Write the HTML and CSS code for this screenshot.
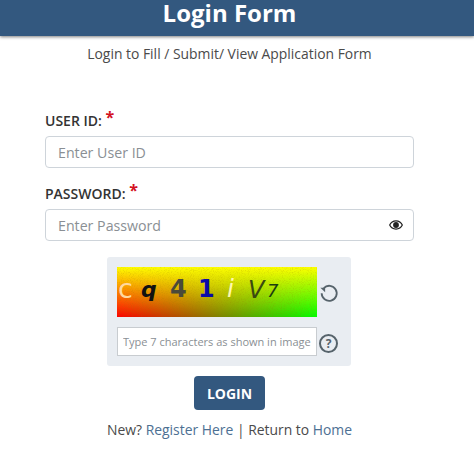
FILE: index.html
```html
<!DOCTYPE html>
<html lang="en">
<head>
    <meta charset="UTF-8">
    <meta name="viewport" content="width=device-width, initial-scale=1.0">
    <title>Login Form</title>
    <link rel="stylesheet" href="styles.css">
</head>
<body>
    <header class="banner">
        <h1>Login Form</h1>
    </header>
    <main class="container">
        <p class="subtitle">Login to Fill / Submit/ View Application Form</p>
        <form class="login-form">
            <div class="form-group">
                <label for="userId">USER ID: <span class="required">*</span></label>
                <input type="text" id="userId" placeholder="Enter User ID">
            </div>
            <div class="form-group">
                <label for="password">PASSWORD: <span class="required">*</span></label>
                <div class="password-wrap">
                    <input type="password" id="password" placeholder="Enter Password">
                    <svg class="eye" viewBox="0 0 24 16" width="14" height="10">
                        <path d="M12 0C6.500 0 2.300 3.200 0 8c2.300 4.800 6.500 8 12 8s9.700-3.200 12-8c-2.300-4.800-6.500-8-12-8zm0 2c4.300 0 7.700 2.400 9.700 6-2 3.600-5.400 6-9.700 6S4.300 11.600 2.300 8C4.300 4.400 7.700 2 12 2z" fill="#222"/>
                        <circle cx="12" cy="8" r="5" fill="#222"/>
                    </svg>
                </div>
            </div>
            <div class="captcha-box">
                <div class="captcha-row">
                    <div class="captcha-image">
                        <svg class="captcha-noise" width="200" height="50">
                            <filter id="grain">
                                <feTurbulence type="fractalNoise" baseFrequency="1.1" numOctaves="2" seed="4"/>
                                <feColorMatrix values="0 0 0 0 0.300  0 0 0 0 0.200  0 0 0 0 0  0 0 0 2.200 -1"/>
                            </filter>
                            <rect width="200" height="50" filter="url(#grain)"/>
                        </svg>
                        <span class="ch ch-c">c</span>
                        <span class="ch ch-q">q</span>
                        <span class="ch ch-4">4</span>
                        <span class="ch ch-1">1</span>
                        <span class="ch ch-i">i</span>
                        <span class="ch ch-v">V</span>
                        <span class="ch ch-7">7</span>
                    </div>
                    <svg class="captcha-icon" viewBox="0 0 24 24" width="22" height="22" fill="none" stroke="#56636b" stroke-width="2">
                        <path d="M6.300 6.600A8.200 8.200 0 1 1 4 12.300"/>
                        <path d="M2.600 6.200h5.200v5" stroke="none" fill="#56636b"/>
                    </svg>
                </div>
                <div class="captcha-row">
                    <input type="text" class="captcha-input" placeholder="Type 7 characters as shown in image">
                    <span class="help-icon">?</span>
                </div>
            </div>
            <button type="submit" class="login-btn">LOGIN</button>
            <p class="links">New? <a href="#">Register Here</a> | Return to <a href="#">Home</a></p>
        </form>
    </main>
</body>
</html>
```

FILE: styles.css
```css
body {
    font-family: "Open Sans", sans-serif;
    margin: 0;
    background-color: #fff;
    color: #4a4a4a;
}
.banner {
    height: 36px;
    background-color: #33587f;
    box-shadow: 0 1px 3px rgba(0,0,0,0.5);
    padding-right: 15px;
    text-align: center;
}
.banner h1 {
    margin: 0;
    color: #fff;
    font-size: 24px;
    font-weight: 700;
    line-height: 26px;
}
.container {
    width: 369px;
    margin-left: 45px;
}
.subtitle {
    margin: 8px 0 0;
    text-align: center;
    font-size: 13.900px;
    line-height: 20px;
    white-space: nowrap;
}
.login-form {
    margin-top: 44px;
}
.form-group {
    margin-bottom: 13px;
}
label {
    display: block;
    height: 28px;
    font-size: 14px;
    font-weight: 600;
    line-height: 25px;
    color: #333;
}
.required {
    color: #d3121f;
    font-size: 16px;
    font-weight: 700;
    position: relative;
    top: -3px;
}
input {
    font-family: inherit;
    box-sizing: border-box;
    border: 1px solid #ced4da;
    background: #fff;
}
input::placeholder {
    color: #8a8f94;
    opacity: 1;
}
.form-group input {
    display: block;
    width: 100%;
    height: 32px;
    padding: 0 12px;
    border-radius: 4px;
    font-size: 14.200px;
}
.password-wrap {
    position: relative;
}
.eye {
    position: absolute;
    right: 11px;
    top: 11px;
}
.captcha-box {
    width: 244px;
    height: 109px;
    box-sizing: border-box;
    margin: 16px 0 0 62px;
    padding: 10px;
    background-color: #e9edf2;
    border-radius: 3px;
    display: flex;
    flex-direction: column;
    gap: 10px;
}
.captcha-row {
    display: flex;
    align-items: center;
    gap: 1px;
}
.captcha-image {
    position: relative;
    width: 200px;
    height: 50px;
    overflow: hidden;
    background: linear-gradient(to bottom, #ffff00, rgba(255,255,0,0)), linear-gradient(to right, #ff0000, #00ff00);
}
.captcha-noise {
    position: absolute;
    left: 0;
    top: 0;
    opacity: 0.22;
}
.ch {
    position: absolute;
    font-family: "DejaVu Sans", sans-serif;
    line-height: 1;
}
.ch-c { left: 1px; top: 8px; font-size: 27px; color: #ffd9a0; }
.ch-q { left: 24px; top: 12px; font-size: 22px; font-weight: 700; font-style: italic; color: #111; }
.ch-4 { left: 53px; top: 10px; font-size: 24px; font-weight: 700; color: #4a4a3a; }
.ch-1 { left: 81px; top: 10px; font-size: 24px; font-weight: 700; color: #0a0aa8; }
.ch-i { left: 110px; top: 9px; font-size: 25px; font-style: italic; color: #fff8b0; }
.ch-v { left: 131px; top: 11px; font-size: 24px; font-style: italic; color: #3a4a10; }
.ch-7 { left: 150px; top: 15px; font-size: 18px; font-style: italic; color: #1c3c10; }
.captcha-input {
    width: 200px;
    height: 29px;
    padding: 0 5px;
    font-size: 11px;
    border-color: #c8ccd0;
}
.captcha-icon {
    margin-top: 1px;
}
.help-icon {
    box-sizing: border-box;
    width: 19px;
    height: 19px;
    margin: 4px 0 0 1px;
    border: 2px solid #56636b;
    border-radius: 50%;
    color: #56636b;
    font-size: 12px;
    font-weight: 700;
    line-height: 15px;
    text-align: center;
}
.login-btn {
    display: block;
    width: 71px;
    height: 34px;
    margin: 10px auto 0;
    padding: 0;
    font-family: inherit;
    font-size: 14px;
    font-weight: 700;
    color: #fff;
    background-color: #33587f;
    border: none;
    border-radius: 4px;
}
.links {
    margin: 10px 0 0;
    text-align: center;
    font-size: 13.900px;
    line-height: 20px;
}
.links a {
    color: #4d7093;
    text-decoration: none;
}
```
